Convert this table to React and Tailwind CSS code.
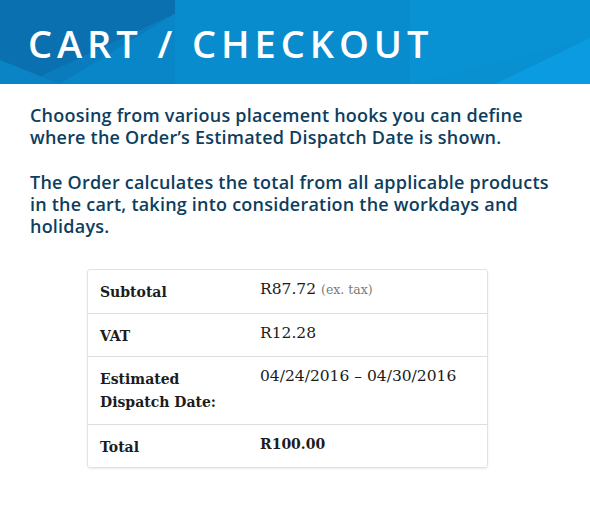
import React from 'react';

const rows = [
  { label: 'Subtotal', value: 'R87.72', note: '(ex. tax)' },
  { label: 'VAT', value: 'R12.28' },
  { label: 'Estimated Dispatch Date:', value: '04/24/2016 – 04/30/2016', tall: true },
  { label: 'Total', value: 'R100.00', bold: true },
];

function HeaderFacets() {
  return (
    <svg
      className="absolute inset-0 w-full h-full"
      viewBox="0 0 590 84"
      preserveAspectRatio="none"
    >
      <rect x="0" y="0" width="590" height="84" fill="#0890d0" />
      <polygon points="0,0 205,0 25,84 0,84" fill="#0b70b0" />
      <polygon points="205,0 175,14 60,84 25,84" fill="#0a7cbd" />
      <polygon points="0,60 60,84 0,84" fill="#0a84c4" />
      <polygon points="60,84 175,14 175,84" fill="#0986c8" />
      <polygon points="175,0 410,0 410,84 175,84" fill="#088ccd" />
      <polygon points="410,0 590,0 590,40 410,84" fill="#0892d4" />
      <polygon points="590,38 590,84 495,84" fill="#0a9be0" />
    </svg>
  );
}

export default function App() {
  return (
    <div className="w-[590px] h-[519px] bg-white overflow-hidden">
      <header className="relative h-[84px] overflow-hidden">
        <HeaderFacets />
        <h1
          className="relative pl-[28px] pt-[20px] text-white font-semibold text-[38px] leading-[46px] tracking-[0.13em]"
          style={{ fontFamily: '"Open Sans", Lato, sans-serif' }}
        >
          CART / CHECKOUT
        </h1>
      </header>

      <div
        className="px-[30px] pt-[20px] text-[#0e3e5e] text-[18px] leading-[22px] font-semibold tracking-[0.012em] whitespace-nowrap"
        style={{ fontFamily: '"Open Sans", sans-serif' }}
      >
        <p>
          Choosing from various placement hooks you can define
          <br />
          where the Order’s Estimated Dispatch Date is shown.
        </p>
        <p className="mt-[23px]">
          The Order calculates the total from all applicable products
          <br />
          in the cart, taking into consideration the workdays and
          <br />
          holidays.
        </p>
      </div>

      <div
        className="ml-[87px] mt-[32px] w-[401px] border border-[#e2e2e2] rounded-[3px] shadow-[0_1px_2px_rgba(0,0,0,0.08)] text-[#1c1c1c]"
        style={{ fontFamily: '"DejaVu Serif", serif' }}
      >
        {rows.map((row, i) => (
          <div
            key={row.label}
            className={`grid grid-cols-[172px_1fr] ${i > 0 ? 'border-t border-[#dedede]' : ''} ${row.tall ? 'h-[68px]' : 'h-[43px]'}`}
          >
            <div className={`pl-[12px] pt-[11px] font-bold text-[14px] leading-[23px] ${row.tall ? 'w-[130px]' : ''}`}>
              {row.label}
            </div>
            <div className={`pt-[8px] leading-[23px] ${row.bold ? 'font-bold text-[14px]' : 'text-[15.5px]'}`}>
              {row.value}
              {row.note && (
                <span className="ml-[5px] text-[12.5px] text-[#7a7a7a]">{row.note}</span>
              )}
            </div>
          </div>
        ))}
      </div>
    </div>
  );
}
